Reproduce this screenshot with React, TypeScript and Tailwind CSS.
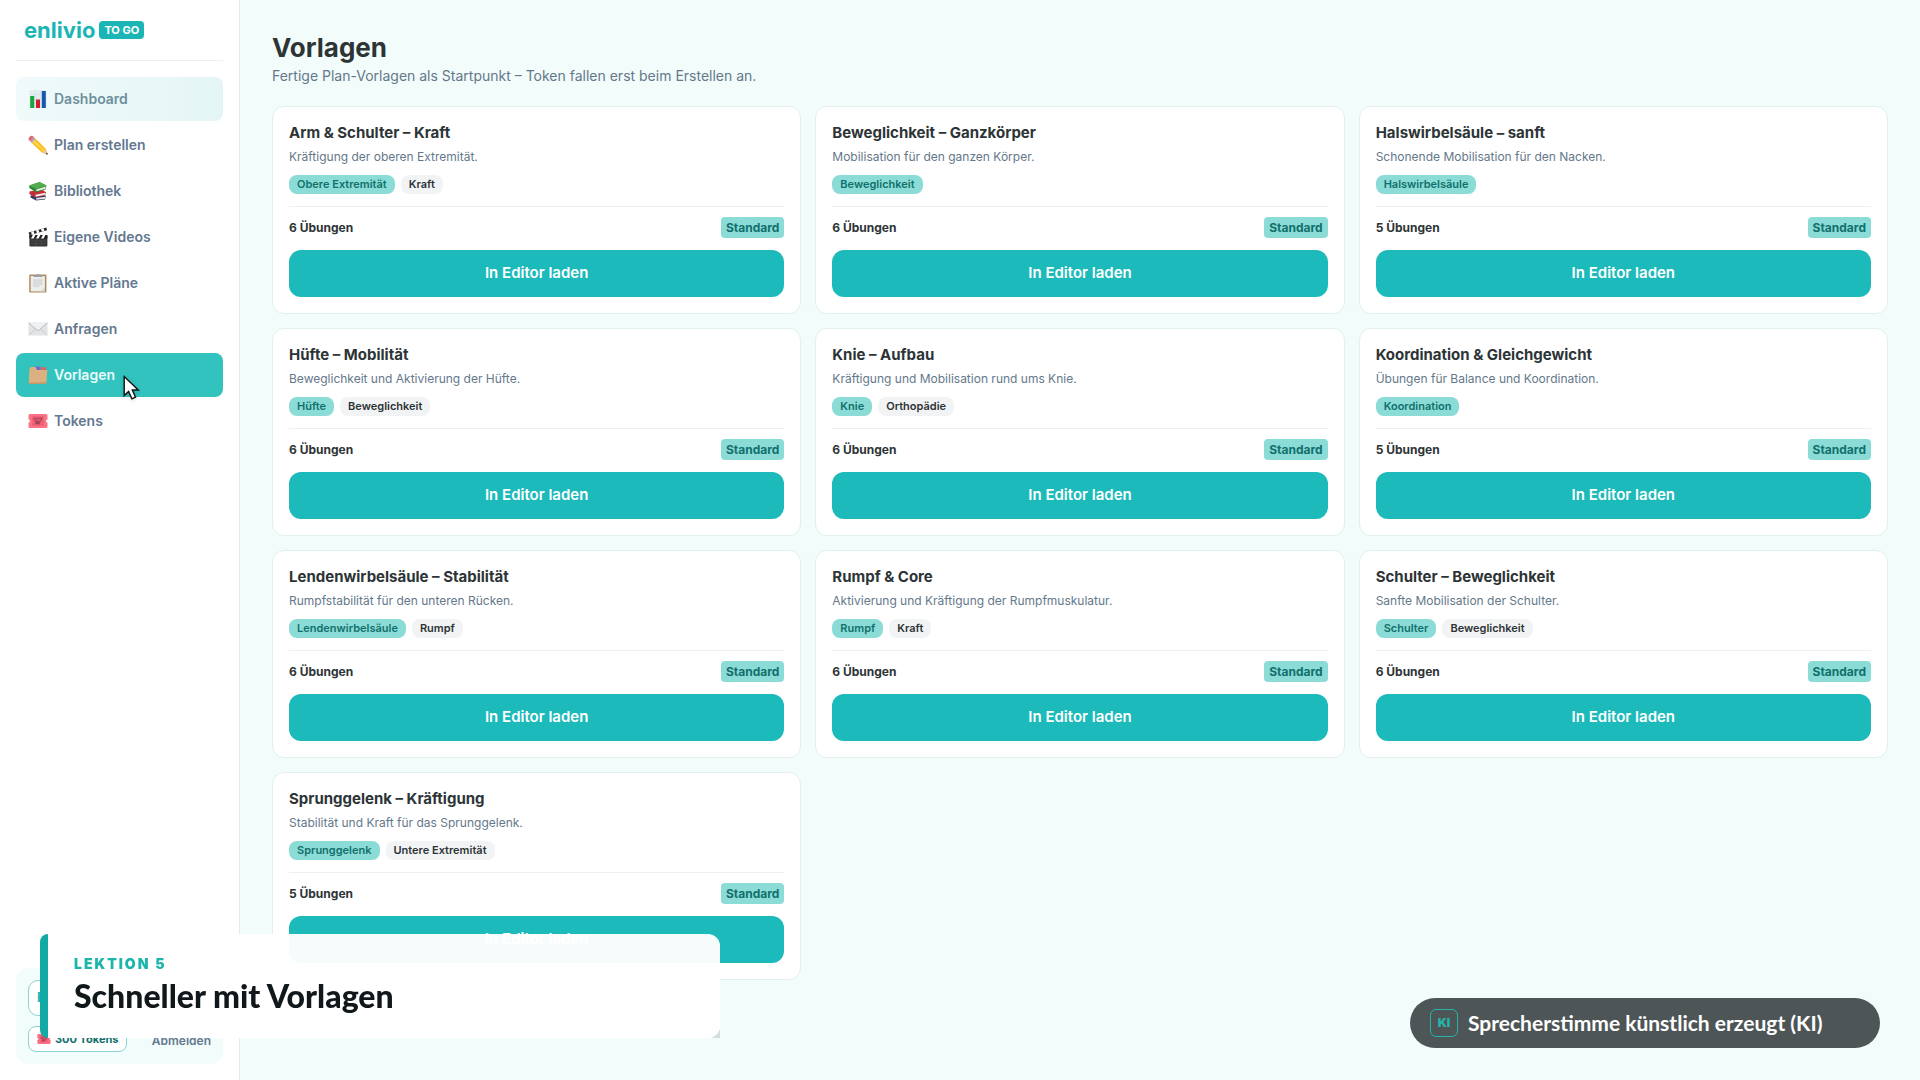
import type { ReactNode } from 'react';

interface Template {
  title: string;
  text: string;
  tags: string[];
  count: number;
}

const templates: Template[] = [
  { title: 'Arm & Schulter – Kraft', text: 'Kräftigung der oberen Extremität.', tags: ['Obere Extremität', 'Kraft'], count: 6 },
  { title: 'Beweglichkeit – Ganzkörper', text: 'Mobilisation für den ganzen Körper.', tags: ['Beweglichkeit'], count: 6 },
  { title: 'Halswirbelsäule – sanft', text: 'Schonende Mobilisation für den Nacken.', tags: ['Halswirbelsäule'], count: 5 },
  { title: 'Hüfte – Mobilität', text: 'Beweglichkeit und Aktivierung der Hüfte.', tags: ['Hüfte', 'Beweglichkeit'], count: 6 },
  { title: 'Knie – Aufbau', text: 'Kräftigung und Mobilisation rund ums Knie.', tags: ['Knie', 'Orthopädie'], count: 6 },
  { title: 'Koordination & Gleichgewicht', text: 'Übungen für Balance und Koordination.', tags: ['Koordination'], count: 5 },
  { title: 'Lendenwirbelsäule – Stabilität', text: 'Rumpfstabilität für den unteren Rücken.', tags: ['Lendenwirbelsäule', 'Rumpf'], count: 6 },
  { title: 'Rumpf & Core', text: 'Aktivierung und Kräftigung der Rumpfmuskulatur.', tags: ['Rumpf', 'Kraft'], count: 6 },
  { title: 'Schulter – Beweglichkeit', text: 'Sanfte Mobilisation der Schulter.', tags: ['Schulter', 'Beweglichkeit'], count: 6 },
  { title: 'Sprunggelenk – Kräftigung', text: 'Stabilität und Kraft für das Sprunggelenk.', tags: ['Sprunggelenk', 'Untere Extremität'], count: 5 },
];

const Icon = ({ children, small }: { children: ReactNode; small?: boolean }) => (
  <svg viewBox="0 0 20 20" className={small ? 'size-3.5 shrink-0' : 'size-5 shrink-0'} aria-hidden="true">
    {children}
  </svg>
);

const ticket = (
  <>
    <path d="M2 3h16a1.5 1.5 0 0 1 1.5 1.5v4a1.5 1.5 0 0 0 0 3v4A1.5 1.5 0 0 1 18 17H2a1.5 1.5 0 0 1-1.5-1.5v-4a1.5 1.5 0 0 0 0-3v-4A1.5 1.5 0 0 1 2 3z" fill="#fb7185" />
    <rect x="4" y="5" width="12" height="10" rx="1" fill="#ef6075" />
    <path d="M5.5 7.3h2M8.3 7.3h2M11 7.3h3.5M6 9h2.5M9.5 9H11M12 9h2M8 13.2v-2.4h1.5v2.4M11 13.2v-2.4h1.5" stroke="#8d3a4a" strokeWidth="1.1" fill="none" />
  </>
);

const navItems = [
  {
    label: 'Dashboard',
    icon: (
      <>
        <rect x="1.5" y="1" width="17" height="18" fill="#e4eef2" />
        <path d="M1.5 5.5h17M1.5 10h17M1.5 14.5h17M7.3 1v18M12.8 1v18" stroke="#cddbe2" strokeWidth=".5" />
        <rect x="2.2" y="7" width="4" height="12" fill="#19a63d" />
        <rect x="8" y="10.5" width="4" height="8.5" fill="#cf1f2f" />
        <rect x="13.8" y="2" width="4" height="17" fill="#1558ad" />
      </>
    ),
  },
  {
    label: 'Plan erstellen',
    icon: (
      <>
        <path d="M4.6 1.1 1 4.9 3.4 7.5 7.3 3.4z" fill="#e5838d" />
        <path d="M.7 4.4C0 2.6 2.9-.1 4.5.9l.9.9-3.5 3.9z" fill="#d76c78" />
        <path d="M2.8 6.9 6.6 2.8 7.9 4 4 8.2z" fill="#a9b4ba" />
        <path d="M4 8.2 7.9 4 18.2 14.2 14.4 17.9z" fill="#f8bd1d" />
        <path d="M5.2 7 6.6 5.4 17 15.4 15.7 16.7z" fill="#ffd751" />
        <path d="m14.4 17.9 3.8-3.7 1.6 5.5z" fill="#e8c393" />
        <path d="m17.7 18.9 1.4-1.4.7 2.2z" fill="#333" />
      </>
    ),
  },
  {
    label: 'Bibliothek',
    icon: (
      <>
        <path d="m2.5 14.5 11-1.5 4.5 2-1 3.4-9 1.1-5.5-3z" fill="#353d68" />
        <path d="m8.2 17 9.5-1.3-.4 2-9 1z" fill="#e7e5df" />
        <path d="M1.5 10.5 13 8l5 3.3-.8 3-9.8 2.2-6-3.6z" fill="#c32e38" />
        <path d="m7.5 13.7 10-2-.5 2-9.4 2z" fill="#f1ece6" />
        <path d="M1.3 4.5 11.5 1l7 3.6-.9 3.9L8 11.2 1.3 7z" fill="#31883c" />
        <path d="M1.3 4.5 11.5 1l7 3.6L8.3 8z" fill="#55ac4f" />
        <path d="m8.4 8.4 9.4-2.8-.4 2.1-9 2.6z" fill="#f1eee5" />
      </>
    ),
  },
  {
    label: 'Eigene Videos',
    icon: (
      <>
        <path d="m.6 5.5 17.8-5 .6 2.8-17.6 5z" fill="#292929" />
        <path d="m3 4.9 2.6-.8.8 2.7-2.5.8zM8 3.5l2.6-.8.8 2.7-2.5.8zM13 2l2.6-.8.8 2.7-2.5.8z" fill="#fff" />
        <rect x="1.4" y="8" width="18" height="11.6" rx="1" fill="#373737" />
        <rect x="1.4" y="8" width="18" height="3.4" fill="#222" />
        <path d="M3 11.4 4.8 8h2.6l-1.8 3.4zM8 11.4 9.8 8h2.6l-1.8 3.4zM13 11.4 14.8 8h2.6l-1.8 3.4z" fill="#fff" />
        <path d="M3 14h15M3 16.7h15M8 14v4.5M13 14v4.5" stroke="#555" strokeWidth=".6" />
      </>
    ),
  },
  {
    label: 'Aktive Pläne',
    icon: (
      <>
        <rect x="1.2" y="1.6" width="17.2" height="18" rx="1.2" fill="#b08b5a" />
        <rect x="2.7" y="3" width="14.2" height="15.4" fill="#eceded" />
        <path d="M5 7h9.5M5 9h9.5M5 11h9.5M5 13h6.5" stroke="#c4c6ca" strokeWidth=".9" />
        <path d="m12.5 18.4 4.4-4v4z" fill="#cfd1d3" />
        <path d="M5.5 4V2.5H8a2 2 0 0 1 3.8 0h2.7V4z" fill="#9aa3aa" />
      </>
    ),
  },
  {
    label: 'Anfragen',
    icon: (
      <>
        <rect x=".4" y="3.4" width="19.2" height="13.2" rx=".8" fill="#e2e4e6" />
        <path d="m.8 16.2 7-6.4M19.2 16.2l-7-6.4" stroke="#bfc3c7" strokeWidth=".8" />
        <path d="M.6 3.8 8.8 11a1.8 1.8 0 0 0 2.4 0l8.2-7.2" fill="#eff0f1" stroke="#a9afb5" strokeWidth=".8" />
      </>
    ),
  },
  {
    label: 'Vorlagen',
    icon: (
      <>
        <path d="M3 2h5v3h10.5v4H1.5V5z" fill="#c99c68" />
        <path d="M7.5 1.5h5V5h-5z" fill="#7769c8" />
        <path d="M13 2.2h5V5.5h-5z" fill="#e46161" />
        <path d="M1.5 4 3 2l4.5.2L9 5h10.3l-.9 13.5L.8 19z" fill="#dcb182" />
        <path d="m.8 17.8 17.7-.5-.1 1.2L.8 19z" fill="#c4945f" />
      </>
    ),
  },
  { label: 'Tokens', icon: ticket },
];

function Sidebar() {
  return (
    <aside className="sticky top-0 flex h-screen w-60 shrink-0 flex-col border-r border-[#dfecec] bg-white p-4">
      <div className="flex h-7 items-center gap-1 px-2">
        <span className="text-[22px] font-bold leading-7 text-[#1cb5b5]">enlivio</span>
        <span className="rounded bg-[#1cb5b5] px-[5px] text-[11px] font-bold leading-[18px] text-white">TO GO</span>
      </div>

      <nav className="mt-4 flex flex-col gap-0.5 border-t border-[#e9f0f1] pt-4">
        {navItems.map((item) => (
          <a
            key={item.label}
            href="#"
            className={`flex h-11 items-center gap-1.5 rounded-lg px-3 text-sm font-semibold ${
              item.label === 'Vorlagen'
                ? 'bg-[#33c3bf] text-[#e9fbfa]'
                : item.label === 'Dashboard'
                  ? 'bg-linear-to-r from-[#f0fafa] to-[#e4f5f6] text-[#6d8f9c]'
                  : 'text-[#64788f]'
            }`}
          >
            <Icon>{item.icon}</Icon>
            {item.label}
          </a>
        ))}
      </nav>

      <div className="mt-auto flex flex-col gap-2.5 rounded-xl bg-[#f1fcfb] p-3">
        <button className="flex h-9 items-center rounded-[10px] border border-[#8bd3d2] bg-white px-2 text-[13px] font-bold text-[#1cb5b5]">
          E
        </button>
        <div className="flex items-center justify-between">
          <button className="flex h-[26px] items-center gap-1 rounded-lg border border-[#8bd3d2] bg-white px-2 text-[11px] font-bold text-[#11706d]">
            <Icon small>{ticket}</Icon>
            300 Tokens
          </button>
          <button className="pt-1 text-xs font-semibold text-[#64788f]">Abmelden</button>
        </div>
      </div>
    </aside>
  );
}

function TemplateCard({ template }: { template: Template }) {
  return (
    <article className="flex flex-col rounded-xl border border-[#e1efef] bg-white p-4">
      <h2 className="text-[15px] font-bold leading-5 text-[#2d3436]">{template.title}</h2>
      <p className="mt-1 text-xs leading-5 text-[#64788a]">{template.text}</p>
      <div className="mt-2 flex gap-1.5">
        {template.tags.map((tag, idx) => (
          <span
            key={tag}
            className={`rounded-lg px-2 text-[11px] font-semibold leading-[19px] ${
              idx === 0 ? 'bg-[#8bdcd6] text-[#11706d]' : 'bg-[#f2f3f4] text-[#2d3436]'
            }`}
          >
            {tag}
          </span>
        ))}
      </div>
      <div className="mt-3 flex items-center justify-between border-t border-[#ebf1f2] pt-2.5">
        <span className="text-xs font-bold text-[#2d3436]">{template.count} Übungen</span>
        <span className="rounded-sm bg-[#8bdcd6] px-[5px] text-xs font-bold leading-[21px] text-[#11706d]">Standard</span>
      </div>
      <button className="mt-3 h-[47px] rounded-xl bg-[#1cbaba] text-[15px] font-semibold text-white">In Editor laden</button>
    </article>
  );
}

export default function App() {
  return (
    <div className="flex min-h-screen bg-[#f2fcfb] font-['Inter',sans-serif]">
      <Sidebar />

      <main className="min-w-0 flex-1 p-8">
        <h1 className="text-[26px] font-bold leading-8 text-[#2d3436]">Vorlagen</h1>
        <p className="mt-0.5 text-sm leading-5 text-[#64788a]">
          Fertige Plan-Vorlagen als Startpunkt – Token fallen erst beim Erstellen an.
        </p>
        <div className="mt-5 grid grid-cols-3 gap-3.5">
          {templates.map((template) => (
            <TemplateCard key={template.title} template={template} />
          ))}
        </div>
      </main>

      {/* Lesson title */}
      <div className="fixed bottom-[42px] left-10 flex h-[104px] w-[680px]">
        <div className="absolute right-0 bottom-0 size-2 bg-[#d3dfdf]" />
        <div className="w-2 rounded-l-lg bg-[#13aaa5]" />
        <div className="relative flex flex-1 flex-col rounded-r-xl bg-white/96 px-[26px] pt-5">
          <p className="text-sm font-black leading-5 tracking-[2px] text-[#1cb5ac]">LEKTION 5</p>
          <p className="mt-0.5 font-['Lato',sans-serif] text-[32px] font-black leading-10 text-[#11181b]">Schneller mit Vorlagen</p>
        </div>
      </div>

      {/* Voice notice */}
      <div className="fixed right-10 bottom-8 flex h-[50px] w-[470px] items-center gap-2.5 rounded-full bg-[#4d5557] px-5">
        <span className="flex size-7 items-center justify-center rounded-md border border-[#26b3aa] text-xs font-black text-[#26b3aa]">KI</span>
        <span className="font-['Lato',sans-serif] text-[21px] font-bold text-white">Sprecherstimme künstlich erzeugt (KI)</span>
      </div>

      <svg viewBox="0 0 18 26" className="fixed top-[375px] left-[123px] h-[26px] w-[18px] drop-shadow-sm" aria-hidden="true">
        <path d="M1.2 1.6v19l4.4-4.2 3.3 7.4 3.6-1.6-3.2-7.2h6z" fill="#fff" stroke="#111" strokeWidth="1.4" />
      </svg>
    </div>
  );
}
